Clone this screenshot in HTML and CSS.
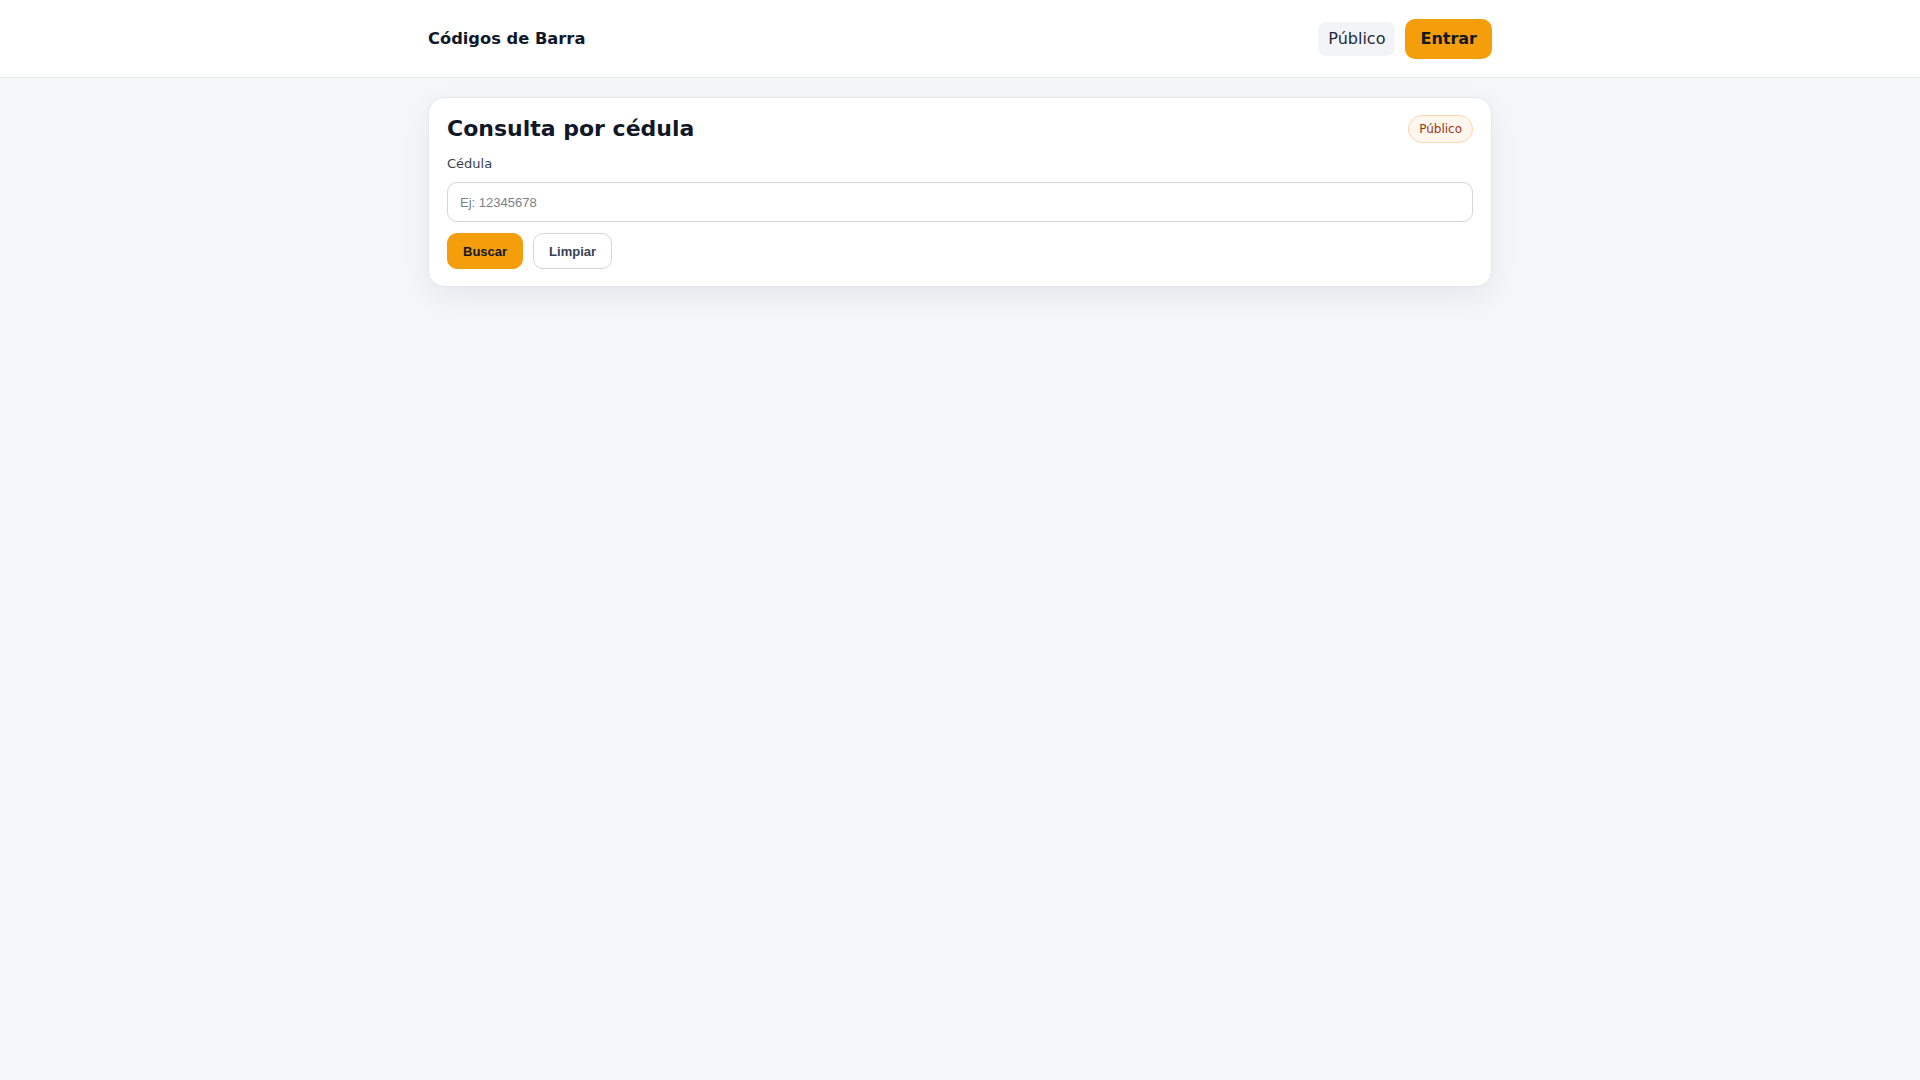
FILE: index.html
```html
<!DOCTYPE html>
<html lang="es">
<head>
<meta charset="utf-8">
<title>Códigos de Barra</title>
<link rel="stylesheet" href="styles.css">
</head>
<body>
<header class="topbar">
  <div class="topbar-inner">
    <div class="brand">Códigos de Barra</div>
    <nav class="nav">
      <a class="nav-link" href="#">Público</a>
      <a class="nav-btn" href="#">Entrar</a>
    </nav>
  </div>
</header>
<main class="container">
  <section class="card">
    <div class="card-head">
      <h1 class="card-title">Consulta por cédula</h1>
      <span class="badge">Público</span>
    </div>
    <label class="field-label" for="cedula">Cédula</label>
    <input class="field-input" id="cedula" type="text" placeholder="Ej: 12345678">
    <div class="actions">
      <button class="btn btn-primary" type="button">Buscar</button>
      <button class="btn btn-ghost" type="button">Limpiar</button>
    </div>
  </section>
</main>
</body>
</html>
```

FILE: styles.css
```css
* { box-sizing: border-box; }
html, body { margin: 0; padding: 0; }
body {
  background: #f5f6fa;
  font-family: "DejaVu Sans", sans-serif;
  color: #111827;
  min-height: 100vh;
}
.topbar {
  background: #ffffff;
  border-bottom: 1px solid #e5e7eb;
  height: 78px;
}
.topbar-inner {
  width: 1064px;
  margin: 0 auto;
  height: 100%;
  display: flex;
  align-items: center;
  justify-content: space-between;
}
.brand {
  font-size: 16.3px;
  font-weight: 700;
  color: #111827;
}
.nav {
  display: flex;
  align-items: center;
  gap: 10px;
}
.nav-link {
  display: inline-block;
  background: #f3f4f6;
  color: #1f2937;
  text-decoration: none;
  font-size: 16px;
  line-height: 22px;
  padding: 6px 10px;
  border-radius: 8px;
}
.nav-btn {
  display: inline-block;
  background: #f59e0b;
  color: #111827;
  text-decoration: none;
  font-size: 16px;
  font-weight: 700;
  line-height: 20px;
  padding: 10px 15px;
  border-radius: 10px;
}
.container {
  width: 1064px;
  margin: 19px auto 0;
}
.card {
  background: #ffffff;
  border: 1px solid #e5e7eb;
  border-radius: 16px;
  padding: 17px 18px;
  box-shadow: 0 10px 30px rgba(17, 24, 39, 0.06);
}
.card-head {
  display: flex;
  align-items: center;
  justify-content: space-between;
  height: 28px;
}
.card-title {
  margin: 0;
  font-size: 22px;
  font-weight: 700;
  line-height: 28px;
  color: #111827;
}
.badge {
  display: inline-block;
  font-size: 12px;
  line-height: 16px;
  padding: 5px 10px;
  border-radius: 999px;
  background: #fff7ed;
  border: 1px solid #fed7aa;
  color: #9a3412;
}
.field-label {
  display: block;
  margin-top: 12px;
  margin-bottom: 9px;
  font-size: 13px;
  line-height: 18px;
  color: #374151;
}
.field-input {
  display: block;
  width: 100%;
  height: 40px;
  padding: 0 12px;
  border: 1px solid #d1d5db;
  border-radius: 10px;
  font-family: "Liberation Sans", Arial, sans-serif;
  font-size: 13px;
  color: #111827;
  background: #ffffff;
  outline: none;
}
.field-input::placeholder { color: #7b7f87; }
.actions {
  display: flex;
  gap: 10px;
  margin-top: 11px;
}
.btn {
  font-family: "Liberation Sans", Arial, sans-serif;
  font-size: 13px;
  font-weight: 700;
  height: 36px;
  padding: 0 15px;
  border-radius: 10px;
  cursor: pointer;
}
.btn-primary {
  background: #f59e0b;
  border: 1px solid #f59e0b;
  color: #111827;
}
.btn-ghost {
  background: #ffffff;
  border: 1px solid #d1d5db;
  color: #374151;
}
```
